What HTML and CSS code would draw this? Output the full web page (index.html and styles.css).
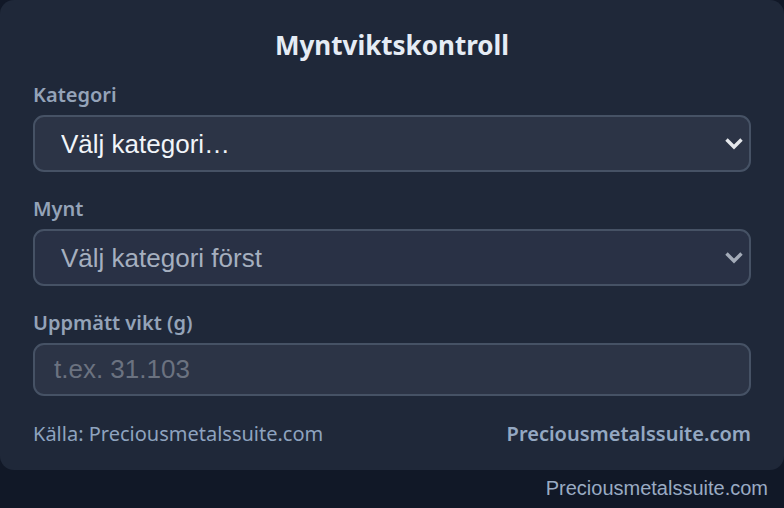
FILE: index.html
```html
<!DOCTYPE html>
<html lang="sv">
<head>
<meta charset="utf-8">
<link rel="stylesheet" href="styles.css">
</head>
<body>
<div class="card">
  <h1 class="title">Myntviktskontroll</h1>
  <div class="field">
    <label class="label">Kategori</label>
    <div class="select-wrap">
      <select class="select"><option>Välj kategori…</option></select>
      <svg class="chev" width="20" height="13" viewBox="0 0 20 13"><path d="M2.5 2.5l7.5 7.5 7.5-7.5" fill="none" stroke="#e5e7eb" stroke-width="3.4"/></svg>
    </div>
  </div>
  <div class="field">
    <label class="label">Mynt</label>
    <div class="select-wrap">
      <select class="select muted" disabled><option>Välj kategori först</option></select>
      <svg class="chev" width="20" height="13" viewBox="0 0 20 13"><path d="M2.5 2.5l7.5 7.5 7.5-7.5" fill="none" stroke="#a3abb8" stroke-width="3.4"/></svg>
    </div>
  </div>
  <div class="field">
    <label class="label">Uppmätt vikt (g)</label>
    <input class="input" type="text" placeholder="t.ex. 31.103">
  </div>
  <div class="footer">
    <span class="source">Källa: Preciousmetalssuite.com</span>
    <span class="brand">Preciousmetalssuite.com</span>
  </div>
</div>
<div class="watermark">Preciousmetalssuite.com</div>
</body>
</html>
```
FILE: styles.css
```css
html, body { margin: 0; padding: 0; }
body {
  background: #111827;
  font-family: "Noto Sans", sans-serif;
  width: 784px;
  height: 508px;
  overflow: hidden;
}
.card {
  background: #1f2839;
  border-radius: 14px;
  padding: 28px 33px 24px 33px;
  display: flex;
  flex-direction: column;
  width: 784px;
  box-sizing: border-box;
}
.title {
  margin: 0;
  text-align: center;
  color: #e5ecf5;
  font-size: 26px;
  line-height: 34px;
  font-weight: 700;
}
.field {
  display: flex;
  flex-direction: column;
  gap: 8px;
  margin-top: 21px;
}
.field + .field { margin-top: 25px; }
.label {
  color: #94a3b8;
  font-size: 20px;
  line-height: 24px;
  font-weight: 600;
}
.select-wrap { position: relative; }
.select {
  appearance: none;
  -webkit-appearance: none;
  width: 100%;
  height: 57px;
  box-sizing: border-box;
  background: #2c3446;
  border: 2px solid #465265;
  border-radius: 11px;
  color: #f1f5f9;
  font-family: "Liberation Sans", Arial, sans-serif;
  font-size: 26px;
  padding: 0 0 0 26px;
  outline: none;
}
.select.muted { color: #a5afbf; background: #293145; opacity: 1; }
.chev {
  position: absolute;
  right: 7px;
  top: 22px;
  pointer-events: none;
}
.input {
  height: 53px;
  box-sizing: border-box;
  background: #2c3446;
  border: 2px solid #465265;
  border-radius: 11px;
  color: #f1f5f9;
  font-family: "Liberation Sans", Arial, sans-serif;
  font-size: 26px;
  padding: 0 0 0 19px;
  outline: none;
}
.input::placeholder { color: #6b7280; }
.footer {
  margin-top: 26px;
  display: flex;
  justify-content: space-between;
  align-items: center;
  font-size: 20px;
  line-height: 24px;
  color: #8ea3bf;
}
.brand { font-weight: 600; color: #94a8c2; }
.watermark {
  text-align: right;
  padding: 6px 16px 0 0;
  font-family: "Liberation Sans", Arial, sans-serif;
  font-size: 20px;
  color: #9aabc3;
  line-height: 24px;
}
```
